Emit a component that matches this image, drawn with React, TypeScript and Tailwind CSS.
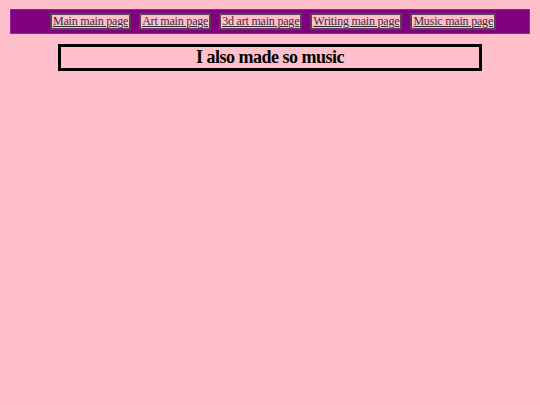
const links = [
  "Main main page",
  "Art main page",
  "3d art main page",
  "Writing main page",
  "Music main page",
];

const App = () => {
  return (
    <div
      className="min-h-screen bg-[#ffc0cb] pt-[9px]"
      style={{ fontFamily: '"Liberation Serif", "Times New Roman", serif' }}
    >
      {/* Top nav */}
      <nav className="mx-[10px] flex h-[25px] items-center justify-center gap-[8px] border border-[#a020a0] bg-[#800080] pl-[6px]">
        {links.map((label) => (
          <a
            key={label}
            href="#"
            className="border-2 border-[#5a4058] bg-[#ffc0cb] px-px text-[12px] leading-[13px] tracking-[-0.2px] text-[#3a2a3a] underline"
          >
            {label}
          </a>
        ))}
      </nav>

      {/* Page title */}
      <h1 className="mx-auto mt-[10px] w-[424px] border-[3px] border-black text-center text-[18px] font-bold leading-[21px] tracking-[-0.5px] text-black">
        I also made so music
      </h1>
    </div>
  );
};

export default App;
